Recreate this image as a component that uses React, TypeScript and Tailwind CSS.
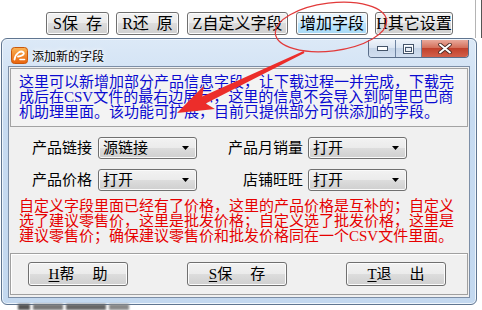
import React from 'react';

const btn =
  'h-[23px] flex items-center justify-center rounded-[3px] border border-[#707070] shadow-[inset_0_0_0_1px_#fcfcfc] text-[16px] leading-none text-black';
const grey = 'bg-[linear-gradient(#f2f2f2,#ebebeb_50%,#dddddd_50%,#cfcfcf)]';
const hot = 'bg-[linear-gradient(#eaf6fd,#d9f0fc_50%,#bee6fd_50%,#a7d9f5)] border-[#3c7fb1]';

const ToolButton = ({ k, label, w, active }: { k: string; label: React.ReactNode; w: string; active?: boolean }) => (
  <div className={`${btn} ${w} ${active ? hot : grey}`}>
    <span>{k}</span>
    {label}
  </div>
);

const Combo = ({ value }: { value: string }) => (
  <div className="w-[99px] h-[22px] flex items-center justify-between pl-[4px] pr-[7px] rounded-[3px] border border-[#707070] shadow-[inset_0_0_0_1px_#fafafa] bg-[linear-gradient(#f2f2f2,#ebebeb_50%,#dddddd_50%,#cfcfcf)] text-[15px] leading-none">
    <span>{value}</span>
    <svg width="7" height="4" viewBox="0 0 7 4">
      <polygon points="0,0 7,0 3.5,4" fill="#000" />
    </svg>
  </div>
);

const FootButton = ({ k, a, b }: { k: string; a: string; b: string }) => (
  <div className="w-[100px] shrink-0 h-[24px] flex items-center justify-center rounded-[3px] border border-[#707070] shadow-[inset_0_0_0_1px_#fcfcfc] bg-[linear-gradient(#f2f2f2,#ebebeb_50%,#dddddd_50%,#cfcfcf)] text-[15px] leading-none">
    <span className="underline underline-offset-2">{k}</span>
    <span>{a}</span>
    <span className="ml-[18px]">{b}</span>
  </div>
);

export default function App() {
  return (
    <div className="relative w-[482px] h-[310px] overflow-hidden bg-white font-['Liberation_Serif','Noto_Sans_CJK_SC',serif] text-black">
      {/* toolbar of the app behind */}
      <div className="flex h-[38px]">
        <div className="flex gap-[7px] pl-[46px] pt-[12px]">
          <ToolButton k="S" label={<><span>保</span><span className="ml-[8px]">存</span></>} w="w-[63px]" />
          <ToolButton k="R" label={<><span>还</span><span className="ml-[8px]">原</span></>} w="w-[63px]" />
          <ToolButton k="Z" label="自定义字段" w="w-[101px] ml-[1px]" />
          <ToolButton k="" label="增加字段" w="w-[72px] ml-[1px]" active />
          <ToolButton k="H" label="其它设置" w="w-[78px]" />
        </div>
        <div className="ml-[22px] w-[2px] h-full bg-[#b4b4b4]" />
        <div className="ml-[5px] w-[2px] h-full bg-[#555]" />
      </div>

      {/* dialog window */}
      <div className="ml-[1px] w-[476px] h-[267px] flex flex-col rounded-[6px] border border-[#5f7590] bg-[linear-gradient(180deg,#dce9f7,#c7dbf1_30%,#c3d8ef)] shadow-[inset_0_0_0_1px_#eef5fc]">
        <div className="h-[27px] flex items-start">
          <div className="flex items-center pl-[9px] pt-[8px] gap-[4px]">
            <svg width="17" height="17" viewBox="0 0 17 17">
              <defs>
                <linearGradient id="ali" x1="0" y1="0" x2="0" y2="1">
                  <stop offset="0" stopColor="#fbb455" />
                  <stop offset="1" stopColor="#e8620c" />
                </linearGradient>
              </defs>
              <rect x="0.5" y="0.5" width="16" height="16" rx="3" fill="url(#ali)" stroke="#c9570b" />
              <path d="M3.5 12.5 C4.5 6, 10 3, 12.5 5.5 C14 7.5, 10 9.5, 7 9.5" stroke="#fff" strokeWidth="1.8" fill="none" strokeLinecap="round" />
              <path d="M9 12.5 L13.5 12.5" stroke="#fff" strokeWidth="1.6" strokeLinecap="round" />
            </svg>
            <span className="font-['Noto_Sans_CJK_SC',sans-serif] text-[12px] leading-none text-black [text-shadow:0_0_6px_#fff,0_0_3px_#fff]">添加新的字段</span>
          </div>
          <div className="ml-auto mr-[7px] mt-[1px] flex h-[18px] rounded-b-[4px] border border-t-0 border-[#5a6e8a] overflow-hidden">
            <div className="w-[27px] h-full flex items-center justify-center border-r border-[#6d82a0] bg-[linear-gradient(#eef3fa,#dbe5f2_45%,#c6d5e8_50%,#d2dff0)]">
              <svg width="11" height="5" viewBox="0 0 11 5">
                <rect x="0.5" y="0.5" width="10" height="4" fill="#fff" stroke="#44546a" />
              </svg>
            </div>
            <div className="w-[26px] h-full flex items-center justify-center border-r border-[#6d82a0] bg-[linear-gradient(#eef3fa,#dbe5f2_45%,#c6d5e8_50%,#d2dff0)]">
              <svg width="11" height="10" viewBox="0 0 11 10">
                <rect x="0.5" y="0.5" width="10" height="9" fill="none" stroke="#44546a" />
                <rect x="1.5" y="1.5" width="8" height="7" fill="none" stroke="#fff" />
                <rect x="2.5" y="3.5" width="6" height="4" fill="#e8eef6" stroke="#44546a" />
              </svg>
            </div>
            <div className="w-[46px] h-full flex items-center justify-center bg-[linear-gradient(#e9a99b,#d4705b_45%,#c1412c_50%,#d3604a)]">
              <svg width="14" height="11" viewBox="0 0 14 11">
                <path d="M2 1.5 L12 9.5 M12 1.5 L2 9.5" stroke="#4a2a24" strokeWidth="3.6" strokeLinecap="round" />
                <path d="M2 1.5 L12 9.5 M12 1.5 L2 9.5" stroke="#fff" strokeWidth="2" strokeLinecap="round" />
              </svg>
            </div>
          </div>
        </div>

        {/* client area */}
        <div className="mx-[6px] h-[232px] flex flex-col border border-[#7c8ea6] bg-[#f0f0f0]">
          <div className="mx-[1px] mt-[1px] h-[59px] border border-[#a3a3a3] bg-[#f3f3f3] px-[8px] pt-[6px] text-[15px] leading-[15px] text-[#0a0ad0] whitespace-nowrap">
            这里可以新增加部分产品信息字段，让下载过程一并完成，下载完
            <br />
            成后在CSV文件的最右边展示，这里的信息不会导入到阿里巴巴商
            <br />
            机助理里面。该功能可扩展，目前只提供部分可供添加的字段。
          </div>

          <div className="mt-[10px] flex flex-col gap-[10px] text-[15px] leading-none">
            <div className="flex items-center">
              <div className="w-[83px] text-right">产品链接</div>
              <div className="ml-[6px]"><Combo value="源链接" /></div>
              <div className="w-[106px] text-right">产品月销量</div>
              <div className="ml-[5px]"><Combo value="打开" /></div>
            </div>
            <div className="flex items-center">
              <div className="w-[83px] text-right">产品价格</div>
              <div className="ml-[6px]"><Combo value="打开" /></div>
              <div className="w-[106px] text-right">店铺旺旺</div>
              <div className="ml-[5px]"><Combo value="打开" /></div>
            </div>
          </div>

          <div className="mt-[8px] pl-[10px] text-[15px] leading-[15px] text-[#e60000] whitespace-nowrap">
            自定义字段里面已经有了价格，这里的产品价格是互补的；自定义
            <br />
            选了建议零售价，这里是批发价格；自定义选了批发价格，这里是
            <br />
            建议零售价；确保建议零售价和批发价格同在一个CSV文件里面。
          </div>

          <div className="mt-[9px] mx-[1px] h-[42px] border border-[#a0a0a0] shadow-[inset_1px_1px_0_#fff] flex items-start gap-[59px] pl-[17px] pt-[8px]">
            <FootButton k="H" a="帮" b="助" />
            <FootButton k="S" a="保" b="存" />
            <FootButton k="T" a="退" b="出" />
          </div>
        </div>
      </div>

      {/* blurred edge of the app behind */}
      <div className="flex gap-[3px] pl-[18px] -mt-[1px] blur-[1px]">
        <div className="w-[12px] h-[6px] bg-[#555]" />
        <div className="w-[30px] h-[6px] bg-[#777]" />
        <div className="w-[40px] h-[6px] bg-[#666]" />
        <div className="w-[20px] h-[6px] bg-[#888]" />
      </div>

      {/* red annotation drawn over the screenshot */}
      <svg className="absolute inset-0 pointer-events-none" width="482" height="310" viewBox="0 0 482 310">
        <ellipse cx="331" cy="27" rx="56" ry="24" transform="rotate(-7 331 27)" fill="none" stroke="#e23a3a" strokeWidth="1.2" />
        <polygon
          points="177,113 203.8,85.7 202.3,96.4 303.6,51.1 304.4,52.9 205.7,103.6 215,109.1"
          fill="#ec2d2a"
        />
      </svg>
    </div>
  );
}
